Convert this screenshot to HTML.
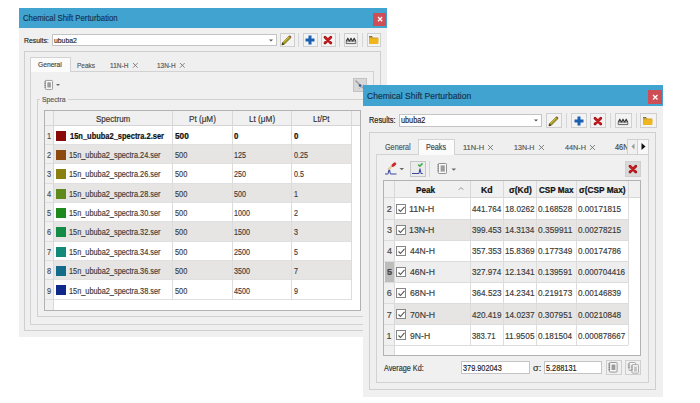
<!DOCTYPE html><html><head><meta charset="utf-8"><style>
html,body{margin:0;padding:0;background:#fff;width:700px;height:403px;overflow:hidden;position:relative;}
.b{position:absolute;box-sizing:border-box;}
.t{position:absolute;white-space:nowrap;font-family:"Liberation Sans",sans-serif;transform-origin:0 0;-webkit-text-stroke:0.16px currentColor;}
svg.b{overflow:visible;}
</style></head><body>
<div class="b" style="left:19px;top:8px;width:368px;height:329px;background:#f0f0f0;"></div>
<div class="b" style="left:19px;top:8px;width:368px;height:20px;background:#41a3cf;"></div>
<div class="t" style="left:23.11px;top:12px;font-size:9.16px;line-height:12px;color:#15324f;transform:scaleX(0.8497);">Chemical Shift Perturbation</div>
<div class="b" style="left:373px;top:13px;width:13px;height:13px;background:#cf4d55;"></div>
<svg class="b" style="left:377.8px;top:17px" width="4.2" height="4.2" viewBox="0 0 4.2 4.2"><path d="M0 0L4.2 4.2M4.2 0L0 4.2" stroke="#fff" stroke-width="1.3"/></svg>
<div class="t" style="left:24.15px;top:36px;font-size:7.85px;line-height:10px;color:#222;transform:scaleX(0.8722);">Results:</div>
<div class="b" style="left:52px;top:34px;width:225px;height:12px;border:1px solid #c4c4c4;background:#fff;"></div>
<div class="t" style="left:54.06px;top:36px;font-size:7.85px;line-height:10px;color:#222;transform:scaleX(0.8699);">ububa2</div>
<svg class="b" style="left:268px;top:38px" width="6" height="5"><path d="M1 1.5h4l-2 2z" fill="#555"/></svg>
<div class="b" style="left:280px;top:33px;width:15px;height:14px;border:1px solid #cfcfcf;background:#f3f3f3;"></div>
<svg class="b" style="left:281.3px;top:34px" width="12.0" height="12.0" viewBox="0 0 12 12"><path d="M0.9 10.9 L1.5 8.5 L8.0 2.0 L9.8 3.8 L3.3 10.3 Z" fill="#a89a22" stroke="#5a4e10" stroke-width="0.6"/><path d="M2.2 8.4 L8.2 2.4" stroke="#e8df60" stroke-width="0.8"/><path d="M8.0 2.0 L8.8 1.2 L10.6 3.0 L9.8 3.8 Z" fill="#8a4a30"/><path d="M0.9 10.9 L1.5 8.5 L3.3 10.3 Z" fill="#3a3020"/></svg>
<div class="b" style="left:298px;top:33px;width:1px;height:14px;background:#d6d6d6;"></div>
<div class="b" style="left:303px;top:33px;width:15px;height:14px;border:1px solid #cfcfcf;background:#f3f3f3;"></div>
<svg class="b" style="left:304px;top:34px" width="12.0" height="12.0" viewBox="0 0 12 12"><path d="M4.5 1.6h3v3h3v3h-3v3h-3v-3h-3v-3h3z" fill="#1b5fb2"/></svg>
<div class="b" style="left:321px;top:33px;width:15px;height:14px;border:1px solid #cfcfcf;background:#f3f3f3;"></div>
<svg class="b" style="left:322px;top:34px" width="12.0" height="12.0" viewBox="0 0 12 12"><path d="M3 3.2L8.8 9M8.8 3.2L3 9" stroke="#a01416" stroke-width="2.8" stroke-linecap="round"/><path d="M3.4 3.6L8.4 8.6M8.4 3.6L3.4 8.6" stroke="#d01c1e" stroke-width="1.4" stroke-linecap="round"/></svg>
<div class="b" style="left:339px;top:33px;width:1px;height:14px;background:#d6d6d6;"></div>
<div class="b" style="left:344px;top:33px;width:14px;height:14px;border:1px solid #cfcfcf;background:#f3f3f3;"></div>
<svg class="b" style="left:345px;top:34px" width="12.0" height="12.0" viewBox="0 0 12 12"><path d="M1.2 7.2 L2.8 4.2 L4.4 7.2 L6 4.2 L7.6 7.2 L9.2 4.2 L10.8 7.2" fill="#aaa" stroke="#3a3a3a" stroke-width="1.1" stroke-linejoin="round"/><path d="M1.2 7.4 V9.6 H10.8 V7.4" fill="none" stroke="#555" stroke-width="0.9"/><path d="M1.2 7.6 H10.8" stroke="#777" stroke-width="0.7"/></svg>
<div class="b" style="left:362px;top:33px;width:1px;height:14px;background:#d6d6d6;"></div>
<div class="b" style="left:367px;top:33px;width:14px;height:14px;border:1px solid #cfcfcf;background:#f3f3f3;"></div>
<svg class="b" style="left:368px;top:34px" width="12.0" height="12.0" viewBox="0 0 12 12"><path d="M1 2.4h3l0.8 1h5.4v6.4h-9.2z" fill="#cfa22a"/><path d="M1 2.6h3l0.6 0.8" fill="none" stroke="#6e6430" stroke-width="0.9"/><path d="M1.4 4.4h9.2l-0.5 5.6h-8.8z" fill="#f0b61e"/></svg>
<div class="b" style="left:24px;top:51px;width:357px;height:280px;border:1px solid #cfcfcf;background:#efefef;"></div>
<div class="b" style="left:30px;top:71px;width:344px;height:254px;border:1px solid #d2d2d2;background:#f0f0f0;"></div>
<div class="b" style="left:30px;top:57px;width:41px;height:15px;border:1px solid #d2d2d2;background:#fbfbfb;"></div>
<div class="b" style="left:31px;top:71px;width:39px;height:1px;background:#fbfbfb;"></div>
<div class="t" style="left:38.37px;top:60px;font-size:8.00px;line-height:10px;color:#444;transform:scaleX(0.8358);">General</div>
<div class="t" style="left:76.88px;top:61px;font-size:8.00px;line-height:10px;color:#555;transform:scaleX(0.8114);">Peaks</div>
<div class="t" style="left:110.41px;top:61px;font-size:8.00px;line-height:10px;color:#555;transform:scaleX(0.8177);">11N-H</div>
<svg class="b" style="left:133.3px;top:63.2px" width="4.7" height="4.7" viewBox="0 0 4.7 4.7"><path d="M0 0L4.7 4.7M4.7 0L0 4.7" stroke="#6a6a6a" stroke-width="0.8"/></svg>
<div class="t" style="left:156.82px;top:61px;font-size:8.00px;line-height:10px;color:#555;transform:scaleX(0.8044);">13N-H</div>
<svg class="b" style="left:179.8px;top:63.2px" width="4.7" height="4.7" viewBox="0 0 4.7 4.7"><path d="M0 0L4.7 4.7M4.7 0L0 4.7" stroke="#6a6a6a" stroke-width="0.8"/></svg>
<svg class="b" style="left:43.5px;top:79.5px" width="9.0" height="9.9" viewBox="0 0 10 11"><rect x="1.4" y="0.5" width="8.1" height="10" rx="0.9" fill="#f8f8f8" stroke="#8a8a8a" stroke-width="0.9"/><rect x="3.7" y="2.6" width="4" height="5.8" rx="0.6" fill="#9c9c9c"/><path d="M0.2 2h2.2M0.2 4h2.2M0.2 6h2.2M0.2 8h2.2" stroke="#7a7a7a" stroke-width="0.8"/></svg>
<svg class="b" style="left:55.8px;top:84.4px" width="5" height="3"><path d="M0 0h4l-2 2z" fill="#666"/></svg>
<div class="b" style="left:353px;top:78px;width:14px;height:14px;border:1px solid #c2c2c2;background:#d8d8d8;"></div>
<svg class="b" style="left:354px;top:79px" width="12" height="12" viewBox="0 0 12 12"><path d="M1.5 1.5L10 10" stroke="#999" stroke-width="1.2"/><path d="M5 10L10 5" stroke="#bbb" stroke-width="0.8"/><circle cx="6" cy="6.5" r="1.3" fill="#2b5fa8"/></svg>
<div class="b" style="left:37px;top:99px;width:364px;height:218px;border:1px solid #d0d0d0;"></div>
<div class="b" style="left:40px;top:96px;width:28px;height:6px;background:#f0f0f0;"></div>
<div class="t" style="left:42.39px;top:95px;font-size:7.27px;line-height:9px;color:#5a5a5a;transform:scaleX(0.9423);">Spectra</div>
<div class="b" style="left:44px;top:110px;width:317px;height:201px;border:1px solid #b2b2b2;background:#ffffff;"></div>
<div class="b" style="left:45px;top:111px;width:315px;height:14px;background:#f0f0f0;"></div>
<div class="b" style="left:45px;top:125px;width:315px;height:1px;background:#d5d5d5;"></div>
<div class="b" style="left:53px;top:111px;width:1px;height:14px;background:#d8d8d8;"></div>
<div class="b" style="left:172px;top:111px;width:1px;height:14px;background:#d8d8d8;"></div>
<div class="b" style="left:232px;top:111px;width:1px;height:14px;background:#d8d8d8;"></div>
<div class="b" style="left:291px;top:111px;width:1px;height:14px;background:#d8d8d8;"></div>
<div class="b" style="left:351px;top:111px;width:1px;height:14px;background:#d8d8d8;"></div>
<div class="b" style="left:45px;top:126px;width:8px;height:184px;background:#f0f0f0;"></div>
<div class="b" style="left:53px;top:126px;width:1px;height:184px;background:#d8d8d8;"></div>
<div class="t" style="left:96.44px;top:114px;font-size:8.73px;line-height:11px;color:#333;transform:scaleX(0.9178);">Spectrum</div>
<div class="t" style="left:188.65px;top:114px;font-size:8.73px;line-height:11px;color:#333;transform:scaleX(0.9334);">Pt (μM)</div>
<div class="t" style="left:249.34px;top:114px;font-size:8.73px;line-height:11px;color:#333;transform:scaleX(0.9407);">Lt (μM)</div>
<div class="t" style="left:313.16px;top:114px;font-size:8.73px;line-height:11px;color:#333;transform:scaleX(0.9190);">Lt/Pt</div>
<div class="b" style="left:45px;top:144px;width:8px;height:1px;background:#dedede;"></div>
<div class="b" style="left:54px;top:144px;width:297px;height:1px;background:#e0e0e0;"></div>
<div class="b" style="left:172px;top:126px;width:1px;height:19px;background:#dcdcdc;"></div>
<div class="b" style="left:232px;top:126px;width:1px;height:19px;background:#dcdcdc;"></div>
<div class="b" style="left:291px;top:126px;width:1px;height:19px;background:#dcdcdc;"></div>
<div class="b" style="left:351px;top:126px;width:1px;height:19px;background:#dcdcdc;"></div>
<div class="t" style="left:46.85px;top:131px;font-size:8.73px;line-height:11px;color:#4a4a4a;transform:scaleX(0.8500);">1</div>
<div class="b" style="left:56px;top:131px;width:10px;height:10px;background:#8a0a0a;"></div>
<div class="t" style="left:69.55px;top:130px;font-size:8.87px;line-height:12px;color:#111;font-weight:bold;-webkit-text-stroke:0.22px currentColor;transform:scaleX(0.8446);">15n_ububa2_spectra.2.ser</div>
<div class="t" style="left:174.55px;top:131px;font-size:8.73px;line-height:11px;color:#111;font-weight:bold;-webkit-text-stroke:0.22px currentColor;transform:scaleX(0.9483);">500</div>
<div class="t" style="left:234.19px;top:131px;font-size:8.73px;line-height:11px;color:#111;font-weight:bold;-webkit-text-stroke:0.22px currentColor;transform:scaleX(0.9000);">0</div>
<div class="t" style="left:294.19px;top:131px;font-size:8.73px;line-height:11px;color:#111;font-weight:bold;-webkit-text-stroke:0.22px currentColor;transform:scaleX(0.9000);">0</div>
<div class="b" style="left:54px;top:145px;width:297px;height:19px;background:#e6e5e3;"></div>
<div class="b" style="left:45px;top:163px;width:8px;height:1px;background:#dedede;"></div>
<div class="b" style="left:54px;top:163px;width:297px;height:1px;background:#e0e0e0;"></div>
<div class="b" style="left:172px;top:145px;width:1px;height:19px;background:#dcdcdc;"></div>
<div class="b" style="left:232px;top:145px;width:1px;height:19px;background:#dcdcdc;"></div>
<div class="b" style="left:291px;top:145px;width:1px;height:19px;background:#dcdcdc;"></div>
<div class="b" style="left:351px;top:145px;width:1px;height:19px;background:#dcdcdc;"></div>
<div class="t" style="left:46.96px;top:150px;font-size:8.73px;line-height:11px;color:#4a4a4a;transform:scaleX(0.8500);">2</div>
<div class="b" style="left:56px;top:150px;width:10px;height:10px;background:#8c4a10;"></div>
<div class="t" style="left:69.45px;top:149px;font-size:8.87px;line-height:12px;color:#3a3a3a;transform:scaleX(0.8294);">15n_ububa2_spectra.24.ser</div>
<div class="t" style="left:174.50px;top:150px;font-size:8.73px;line-height:11px;color:#3a3a3a;transform:scaleX(0.8504);">500</div>
<div class="t" style="left:233.96px;top:150px;font-size:8.73px;line-height:11px;color:#3a3a3a;transform:scaleX(0.8200);">125</div>
<div class="t" style="left:294.21px;top:150px;font-size:8.73px;line-height:11px;color:#3a3a3a;transform:scaleX(0.8200);">0.25</div>
<div class="b" style="left:45px;top:183px;width:8px;height:1px;background:#dedede;"></div>
<div class="b" style="left:54px;top:183px;width:297px;height:1px;background:#e0e0e0;"></div>
<div class="b" style="left:172px;top:164px;width:1px;height:20px;background:#dcdcdc;"></div>
<div class="b" style="left:232px;top:164px;width:1px;height:20px;background:#dcdcdc;"></div>
<div class="b" style="left:291px;top:164px;width:1px;height:20px;background:#dcdcdc;"></div>
<div class="b" style="left:351px;top:164px;width:1px;height:20px;background:#dcdcdc;"></div>
<div class="t" style="left:46.98px;top:169px;font-size:8.73px;line-height:11px;color:#4a4a4a;transform:scaleX(0.8500);">3</div>
<div class="b" style="left:56px;top:169px;width:10px;height:10px;background:#8a8012;"></div>
<div class="t" style="left:69.45px;top:168px;font-size:8.87px;line-height:12px;color:#3a3a3a;transform:scaleX(0.8294);">15n_ububa2_spectra.26.ser</div>
<div class="t" style="left:174.50px;top:169px;font-size:8.73px;line-height:11px;color:#3a3a3a;transform:scaleX(0.8504);">500</div>
<div class="t" style="left:234.14px;top:169px;font-size:8.73px;line-height:11px;color:#3a3a3a;transform:scaleX(0.8200);">250</div>
<div class="t" style="left:294.21px;top:169px;font-size:8.73px;line-height:11px;color:#3a3a3a;transform:scaleX(0.8200);">0.5</div>
<div class="b" style="left:54px;top:184px;width:297px;height:19px;background:#e6e5e3;"></div>
<div class="b" style="left:45px;top:202px;width:8px;height:1px;background:#dedede;"></div>
<div class="b" style="left:54px;top:202px;width:297px;height:1px;background:#e0e0e0;"></div>
<div class="b" style="left:172px;top:184px;width:1px;height:19px;background:#dcdcdc;"></div>
<div class="b" style="left:232px;top:184px;width:1px;height:19px;background:#dcdcdc;"></div>
<div class="b" style="left:291px;top:184px;width:1px;height:19px;background:#dcdcdc;"></div>
<div class="b" style="left:351px;top:184px;width:1px;height:19px;background:#dcdcdc;"></div>
<div class="t" style="left:46.98px;top:189px;font-size:8.73px;line-height:11px;color:#4a4a4a;transform:scaleX(0.8500);">4</div>
<div class="b" style="left:56px;top:189px;width:10px;height:10px;background:#5d8a1a;"></div>
<div class="t" style="left:69.45px;top:188px;font-size:8.87px;line-height:12px;color:#3a3a3a;transform:scaleX(0.8294);">15n_ububa2_spectra.28.ser</div>
<div class="t" style="left:174.50px;top:189px;font-size:8.73px;line-height:11px;color:#3a3a3a;transform:scaleX(0.8504);">500</div>
<div class="t" style="left:234.21px;top:189px;font-size:8.73px;line-height:11px;color:#3a3a3a;transform:scaleX(0.8200);">500</div>
<div class="t" style="left:293.96px;top:189px;font-size:8.73px;line-height:11px;color:#3a3a3a;transform:scaleX(0.8200);">1</div>
<div class="b" style="left:45px;top:221px;width:8px;height:1px;background:#dedede;"></div>
<div class="b" style="left:54px;top:221px;width:297px;height:1px;background:#e0e0e0;"></div>
<div class="b" style="left:172px;top:203px;width:1px;height:19px;background:#dcdcdc;"></div>
<div class="b" style="left:232px;top:203px;width:1px;height:19px;background:#dcdcdc;"></div>
<div class="b" style="left:291px;top:203px;width:1px;height:19px;background:#dcdcdc;"></div>
<div class="b" style="left:351px;top:203px;width:1px;height:19px;background:#dcdcdc;"></div>
<div class="t" style="left:46.96px;top:208px;font-size:8.73px;line-height:11px;color:#4a4a4a;transform:scaleX(0.8500);">5</div>
<div class="b" style="left:56px;top:208px;width:10px;height:10px;background:#1e8a1e;"></div>
<div class="t" style="left:69.45px;top:207px;font-size:8.87px;line-height:12px;color:#3a3a3a;transform:scaleX(0.8294);">15n_ububa2_spectra.30.ser</div>
<div class="t" style="left:174.50px;top:208px;font-size:8.73px;line-height:11px;color:#3a3a3a;transform:scaleX(0.8504);">500</div>
<div class="t" style="left:233.96px;top:208px;font-size:8.73px;line-height:11px;color:#3a3a3a;transform:scaleX(0.8200);">1000</div>
<div class="t" style="left:294.14px;top:208px;font-size:8.73px;line-height:11px;color:#3a3a3a;transform:scaleX(0.8200);">2</div>
<div class="b" style="left:54px;top:222px;width:297px;height:20px;background:#e6e5e3;"></div>
<div class="b" style="left:45px;top:241px;width:8px;height:1px;background:#dedede;"></div>
<div class="b" style="left:54px;top:241px;width:297px;height:1px;background:#e0e0e0;"></div>
<div class="b" style="left:172px;top:222px;width:1px;height:20px;background:#dcdcdc;"></div>
<div class="b" style="left:232px;top:222px;width:1px;height:20px;background:#dcdcdc;"></div>
<div class="b" style="left:291px;top:222px;width:1px;height:20px;background:#dcdcdc;"></div>
<div class="b" style="left:351px;top:222px;width:1px;height:20px;background:#dcdcdc;"></div>
<div class="t" style="left:46.92px;top:227px;font-size:8.73px;line-height:11px;color:#4a4a4a;transform:scaleX(0.8500);">6</div>
<div class="b" style="left:56px;top:227px;width:10px;height:10px;background:#138a45;"></div>
<div class="t" style="left:69.45px;top:226px;font-size:8.87px;line-height:12px;color:#3a3a3a;transform:scaleX(0.8294);">15n_ububa2_spectra.32.ser</div>
<div class="t" style="left:174.50px;top:227px;font-size:8.73px;line-height:11px;color:#3a3a3a;transform:scaleX(0.8504);">500</div>
<div class="t" style="left:233.96px;top:227px;font-size:8.73px;line-height:11px;color:#3a3a3a;transform:scaleX(0.8200);">1500</div>
<div class="t" style="left:294.25px;top:227px;font-size:8.73px;line-height:11px;color:#3a3a3a;transform:scaleX(0.8200);">3</div>
<div class="b" style="left:45px;top:260px;width:8px;height:1px;background:#dedede;"></div>
<div class="b" style="left:54px;top:260px;width:297px;height:1px;background:#e0e0e0;"></div>
<div class="b" style="left:172px;top:242px;width:1px;height:19px;background:#dcdcdc;"></div>
<div class="b" style="left:232px;top:242px;width:1px;height:19px;background:#dcdcdc;"></div>
<div class="b" style="left:291px;top:242px;width:1px;height:19px;background:#dcdcdc;"></div>
<div class="b" style="left:351px;top:242px;width:1px;height:19px;background:#dcdcdc;"></div>
<div class="t" style="left:46.96px;top:247px;font-size:8.73px;line-height:11px;color:#4a4a4a;transform:scaleX(0.8500);">7</div>
<div class="b" style="left:56px;top:247px;width:10px;height:10px;background:#138a78;"></div>
<div class="t" style="left:69.45px;top:246px;font-size:8.87px;line-height:12px;color:#3a3a3a;transform:scaleX(0.8294);">15n_ububa2_spectra.34.ser</div>
<div class="t" style="left:174.50px;top:247px;font-size:8.73px;line-height:11px;color:#3a3a3a;transform:scaleX(0.8504);">500</div>
<div class="t" style="left:234.14px;top:247px;font-size:8.73px;line-height:11px;color:#3a3a3a;transform:scaleX(0.8200);">2500</div>
<div class="t" style="left:294.21px;top:247px;font-size:8.73px;line-height:11px;color:#3a3a3a;transform:scaleX(0.8200);">5</div>
<div class="b" style="left:54px;top:261px;width:297px;height:19px;background:#e6e5e3;"></div>
<div class="b" style="left:45px;top:279px;width:8px;height:1px;background:#dedede;"></div>
<div class="b" style="left:54px;top:279px;width:297px;height:1px;background:#e0e0e0;"></div>
<div class="b" style="left:172px;top:261px;width:1px;height:19px;background:#dcdcdc;"></div>
<div class="b" style="left:232px;top:261px;width:1px;height:19px;background:#dcdcdc;"></div>
<div class="b" style="left:291px;top:261px;width:1px;height:19px;background:#dcdcdc;"></div>
<div class="b" style="left:351px;top:261px;width:1px;height:19px;background:#dcdcdc;"></div>
<div class="t" style="left:46.96px;top:266px;font-size:8.73px;line-height:11px;color:#4a4a4a;transform:scaleX(0.8500);">8</div>
<div class="b" style="left:56px;top:266px;width:10px;height:10px;background:#136a8a;"></div>
<div class="t" style="left:69.45px;top:265px;font-size:8.87px;line-height:12px;color:#3a3a3a;transform:scaleX(0.8294);">15n_ububa2_spectra.36.ser</div>
<div class="t" style="left:174.50px;top:266px;font-size:8.73px;line-height:11px;color:#3a3a3a;transform:scaleX(0.8504);">500</div>
<div class="t" style="left:234.25px;top:266px;font-size:8.73px;line-height:11px;color:#3a3a3a;transform:scaleX(0.8200);">3500</div>
<div class="t" style="left:294.14px;top:266px;font-size:8.73px;line-height:11px;color:#3a3a3a;transform:scaleX(0.8200);">7</div>
<div class="b" style="left:45px;top:299px;width:8px;height:1px;background:#dedede;"></div>
<div class="b" style="left:54px;top:299px;width:297px;height:1px;background:#e0e0e0;"></div>
<div class="b" style="left:172px;top:280px;width:1px;height:20px;background:#dcdcdc;"></div>
<div class="b" style="left:232px;top:280px;width:1px;height:20px;background:#dcdcdc;"></div>
<div class="b" style="left:291px;top:280px;width:1px;height:20px;background:#dcdcdc;"></div>
<div class="b" style="left:351px;top:280px;width:1px;height:20px;background:#dcdcdc;"></div>
<div class="t" style="left:46.96px;top:286px;font-size:8.73px;line-height:11px;color:#4a4a4a;transform:scaleX(0.8500);">9</div>
<div class="b" style="left:56px;top:285px;width:10px;height:10px;background:#0f2a8a;"></div>
<div class="t" style="left:69.45px;top:285px;font-size:8.87px;line-height:12px;color:#3a3a3a;transform:scaleX(0.8294);">15n_ububa2_spectra.38.ser</div>
<div class="t" style="left:174.50px;top:286px;font-size:8.73px;line-height:11px;color:#3a3a3a;transform:scaleX(0.8504);">500</div>
<div class="t" style="left:234.36px;top:286px;font-size:8.73px;line-height:11px;color:#3a3a3a;transform:scaleX(0.8200);">4500</div>
<div class="t" style="left:294.18px;top:286px;font-size:8.73px;line-height:11px;color:#3a3a3a;transform:scaleX(0.8200);">9</div>
<div class="b" style="left:363px;top:85px;width:300px;height:312px;background:#f0f0f0;"></div>
<div class="b" style="left:363px;top:85px;width:300px;height:21px;background:#41a3cf;"></div>
<div class="t" style="left:367.27px;top:90px;font-size:9.31px;line-height:12px;color:#15324f;transform:scaleX(0.9210);">Chemical Shift Perturbation</div>
<div class="b" style="left:648px;top:90px;width:14px;height:14px;background:#cf4d55;"></div>
<svg class="b" style="left:652.8px;top:95px" width="4.5" height="4.5" viewBox="0 0 4.5 4.5"><path d="M0 0L4.5 4.5M4.5 0L0 4.5" stroke="#fff" stroke-width="1.3"/></svg>
<div class="t" style="left:368.61px;top:115px;font-size:8.15px;line-height:11px;color:#222;transform:scaleX(0.9052);">Results:</div>
<div class="b" style="left:399px;top:114px;width:143px;height:13px;border:1px solid #c4c4c4;background:#fff;"></div>
<div class="t" style="left:401.23px;top:115px;font-size:8.15px;line-height:11px;color:#222;transform:scaleX(0.8960);">ububa2</div>
<svg class="b" style="left:533px;top:118px" width="6" height="5"><path d="M1 1.5h4l-2 2z" fill="#555"/></svg>
<div class="b" style="left:546px;top:113px;width:16px;height:15px;border:1px solid #cfcfcf;background:#f3f3f3;"></div>
<svg class="b" style="left:547.5px;top:114.5px" width="12.0" height="12.0" viewBox="0 0 12 12"><path d="M0.9 10.9 L1.5 8.5 L8.0 2.0 L9.8 3.8 L3.3 10.3 Z" fill="#a89a22" stroke="#5a4e10" stroke-width="0.6"/><path d="M2.2 8.4 L8.2 2.4" stroke="#e8df60" stroke-width="0.8"/><path d="M8.0 2.0 L8.8 1.2 L10.6 3.0 L9.8 3.8 Z" fill="#8a4a30"/><path d="M0.9 10.9 L1.5 8.5 L3.3 10.3 Z" fill="#3a3020"/></svg>
<div class="b" style="left:566px;top:113px;width:1px;height:15px;background:#d6d6d6;"></div>
<div class="b" style="left:571px;top:113px;width:16px;height:15px;border:1px solid #cfcfcf;background:#f3f3f3;"></div>
<svg class="b" style="left:572.5px;top:114.5px" width="12.0" height="12.0" viewBox="0 0 12 12"><path d="M4.5 1.6h3v3h3v3h-3v3h-3v-3h-3v-3h3z" fill="#1b5fb2"/></svg>
<div class="b" style="left:590px;top:113px;width:16px;height:15px;border:1px solid #cfcfcf;background:#f3f3f3;"></div>
<svg class="b" style="left:591.5px;top:114.5px" width="12.0" height="12.0" viewBox="0 0 12 12"><path d="M3 3.2L8.8 9M8.8 3.2L3 9" stroke="#a01416" stroke-width="2.8" stroke-linecap="round"/><path d="M3.4 3.6L8.4 8.6M8.4 3.6L3.4 8.6" stroke="#d01c1e" stroke-width="1.4" stroke-linecap="round"/></svg>
<div class="b" style="left:610px;top:113px;width:1px;height:15px;background:#d6d6d6;"></div>
<div class="b" style="left:615px;top:113px;width:17px;height:15px;border:1px solid #cfcfcf;background:#f3f3f3;"></div>
<svg class="b" style="left:617px;top:114.5px" width="12.0" height="12.0" viewBox="0 0 12 12"><path d="M1.2 7.2 L2.8 4.2 L4.4 7.2 L6 4.2 L7.6 7.2 L9.2 4.2 L10.8 7.2" fill="#aaa" stroke="#3a3a3a" stroke-width="1.1" stroke-linejoin="round"/><path d="M1.2 7.4 V9.6 H10.8 V7.4" fill="none" stroke="#555" stroke-width="0.9"/><path d="M1.2 7.6 H10.8" stroke="#777" stroke-width="0.7"/></svg>
<div class="b" style="left:636px;top:113px;width:1px;height:15px;background:#d6d6d6;"></div>
<div class="b" style="left:640px;top:113px;width:17px;height:15px;border:1px solid #cfcfcf;background:#f3f3f3;"></div>
<svg class="b" style="left:642px;top:114.5px" width="12.0" height="12.0" viewBox="0 0 12 12"><path d="M1 2.4h3l0.8 1h5.4v6.4h-9.2z" fill="#cfa22a"/><path d="M1 2.6h3l0.6 0.8" fill="none" stroke="#6e6430" stroke-width="0.9"/><path d="M1.4 4.4h9.2l-0.5 5.6h-8.8z" fill="#f0b61e"/></svg>
<div class="b" style="left:369px;top:132px;width:287px;height:258px;border:1px solid #cfcfcf;background:#efefef;"></div>
<div class="b" style="left:376px;top:154px;width:273px;height:229px;border:1px solid #d2d2d2;background:#f0f0f0;"></div>
<div class="b" style="left:418px;top:139px;width:37px;height:16px;border:1px solid #d2d2d2;background:#fbfbfb;"></div>
<div class="b" style="left:419px;top:154px;width:35px;height:1px;background:#fbfbfb;"></div>
<div class="t" style="left:384.54px;top:142px;font-size:8.29px;line-height:11px;color:#555;transform:scaleX(0.8730);">General</div>
<div class="t" style="left:426.22px;top:142px;font-size:8.29px;line-height:11px;color:#444;transform:scaleX(0.8690);">Peaks</div>
<div class="t" style="left:462.54px;top:143px;font-size:7.71px;line-height:10px;color:#555;transform:scaleX(0.9753);">11N-H</div>
<svg class="b" style="left:488.3px;top:145.2px" width="4.9" height="4.9" viewBox="0 0 4.9 4.9"><path d="M0 0L4.9 4.9M4.9 0L0 4.9" stroke="#6a6a6a" stroke-width="0.85"/></svg>
<div class="t" style="left:514.07px;top:143px;font-size:7.71px;line-height:10px;color:#555;transform:scaleX(0.9201);">13N-H</div>
<svg class="b" style="left:539.3px;top:145.2px" width="4.9" height="4.9" viewBox="0 0 4.9 4.9"><path d="M0 0L4.9 4.9M4.9 0L0 4.9" stroke="#6a6a6a" stroke-width="0.85"/></svg>
<div class="t" style="left:564.55px;top:143px;font-size:7.71px;line-height:10px;color:#555;transform:scaleX(0.9438);">44N-H</div>
<svg class="b" style="left:590.3px;top:145.2px" width="4.9" height="4.9" viewBox="0 0 4.9 4.9"><path d="M0 0L4.9 4.9M4.9 0L0 4.9" stroke="#6a6a6a" stroke-width="0.85"/></svg>
<div class="b" style="left:610px;top:139px;width:17px;height:15px;overflow:hidden">
<div class="t" style="left:5.45px;top:3px;font-size:8.29px;line-height:11px;color:#444;transform:scaleX(0.8862);">46N-H</div>
</div>
<div class="b" style="left:627px;top:139px;width:11px;height:16px;border:1px solid #d0d0d0;background:#f0f0f0;"></div>
<div class="b" style="left:637px;top:139px;width:12px;height:16px;border:1px solid #d0d0d0;background:#f7f7f7;"></div>
<svg class="b" style="left:629px;top:142px" width="8" height="10"><path d="M5.5 1.5v6l-3-3z" fill="#999"/></svg>
<svg class="b" style="left:639px;top:142px" width="8" height="10"><path d="M2.5 1v7l4-3.5z" fill="#111"/></svg>
<svg class="b" style="left:384px;top:161px" width="14" height="15" viewBox="0 0 14 15"><path d="M1 13H3.6C4.6 13 4.9 7.2 5.2 7.2C5.5 7.2 5.8 13 6.8 13H12.5" fill="none" stroke="#3a48a6" stroke-width="1.1"/><path d="M4.0 8.6L8.8 4.6" stroke="#e2cda6" stroke-width="2.2"/><path d="M9.0 4.4L10.8 2.9" stroke="#cc2a2a" stroke-width="3" stroke-linecap="round"/></svg>
<svg class="b" style="left:399px;top:167px" width="6" height="4"><path d="M0.5 1h4.5l-2.25 2.2z" fill="#666"/></svg>
<div class="b" style="left:410px;top:161px;width:16px;height:16px;border:1px solid #c6c6c6;background:#ebebeb;"></div>
<svg class="b" style="left:410px;top:161px" width="15" height="15" viewBox="0 0 15 15"><path d="M2 12.5H8.6C9.4 12.5 9.7 7.8 10 7.8C10.3 7.8 10.6 12.5 11.4 12.5H12.8" fill="none" stroke="#3a48a6" stroke-width="1.1"/><path d="M8.2 3.6L9.9 5.2L12.5 2.4" fill="none" stroke="#46ac46" stroke-width="1.6"/></svg>
<div class="b" style="left:429px;top:161px;width:1px;height:16px;background:#d6d6d6;"></div>
<svg class="b" style="left:437px;top:163px" width="10" height="11" viewBox="0 0 10 11"><rect x="1.3" y="0.5" width="8.2" height="10" rx="0.8" fill="#f8f8f8" stroke="#888" stroke-width="0.9"/><rect x="3.6" y="2.4" width="4.2" height="6.2" fill="#9c9c9c"/><path d="M0.3 1.8h1.6M0.3 3.8h1.6M0.3 5.8h1.6M0.3 7.8h1.6" stroke="#777" stroke-width="0.8"/></svg>
<svg class="b" style="left:450.5px;top:167.5px" width="6" height="4"><path d="M0.5 0.5h4.6l-2.3 2.3z" fill="#666"/></svg>
<div class="b" style="left:625px;top:161px;width:16px;height:16px;border:1px solid #cfcfcf;background:#d9d9d9;"></div>
<svg class="b" style="left:626.5px;top:162.5px" width="12.0" height="12.0" viewBox="0 0 12 12"><path d="M3 3.2L8.8 9M8.8 3.2L3 9" stroke="#a01416" stroke-width="2.8" stroke-linecap="round"/><path d="M3.4 3.6L8.4 8.6M8.4 3.6L3.4 8.6" stroke="#d01c1e" stroke-width="1.4" stroke-linecap="round"/></svg>
<div class="b" style="left:383px;top:180px;width:258px;height:176px;border:1px solid #b2b2b2;background:#ffffff;"></div>
<div class="b" style="left:384px;top:181px;width:256px;height:16px;background:#f0f0f0;"></div>
<div class="b" style="left:384px;top:197px;width:256px;height:1px;background:#d8d8d8;"></div>
<div class="b" style="left:394px;top:181px;width:1px;height:16px;background:#d8d8d8;"></div>
<div class="b" style="left:470px;top:181px;width:1px;height:16px;background:#d8d8d8;"></div>
<div class="b" style="left:503px;top:181px;width:1px;height:16px;background:#d8d8d8;"></div>
<div class="b" style="left:536px;top:181px;width:1px;height:16px;background:#d8d8d8;"></div>
<div class="b" style="left:576px;top:181px;width:1px;height:16px;background:#d8d8d8;"></div>
<div class="b" style="left:628px;top:181px;width:1px;height:16px;background:#d8d8d8;"></div>
<div class="b" style="left:384px;top:198px;width:10px;height:157px;background:#f0f0f0;"></div>
<div class="b" style="left:394px;top:198px;width:1px;height:157px;background:#d8d8d8;"></div>
<div class="t" style="left:416.07px;top:184px;font-size:9.02px;line-height:12px;color:#111;font-weight:bold;-webkit-text-stroke:0.22px currentColor;transform:scaleX(0.9086);">Peak</div>
<svg class="b" style="left:457.5px;top:185.5px" width="7" height="5"><path d="M0.8 3.8L3.1 1.5L5.4 3.8" fill="none" stroke="#8a8a8a" stroke-width="0.9"/></svg>
<div class="t" style="left:481.13px;top:184px;font-size:9.02px;line-height:12px;color:#111;font-weight:bold;-webkit-text-stroke:0.22px currentColor;transform:scaleX(0.9703);">Kd</div>
<div class="t" style="left:508.66px;top:184px;font-size:9.02px;line-height:12px;color:#111;font-weight:bold;-webkit-text-stroke:0.22px currentColor;transform:scaleX(0.9401);">σ(Kd)</div>
<div class="t" style="left:539.28px;top:184px;font-size:9.02px;line-height:12px;color:#111;font-weight:bold;-webkit-text-stroke:0.22px currentColor;transform:scaleX(0.8971);">CSP Max</div>
<div class="t" style="left:579.37px;top:184px;font-size:9.02px;line-height:12px;color:#111;font-weight:bold;-webkit-text-stroke:0.22px currentColor;transform:scaleX(0.9212);">σ(CSP Max)</div>
<div class="b" style="left:470px;top:198px;width:1px;height:21px;background:#dcdcdc;"></div>
<div class="b" style="left:503px;top:198px;width:1px;height:21px;background:#dcdcdc;"></div>
<div class="b" style="left:536px;top:198px;width:1px;height:21px;background:#dcdcdc;"></div>
<div class="b" style="left:576px;top:198px;width:1px;height:21px;background:#dcdcdc;"></div>
<div class="b" style="left:628px;top:198px;width:1px;height:21px;background:#dcdcdc;"></div>
<div class="b" style="left:384px;top:219px;width:244px;height:1px;background:#dcdcdc;"></div>
<div class="t" style="left:386.75px;top:203px;font-size:9.02px;line-height:12px;color:#444;">2</div>
<div class="b" style="left:396px;top:204px;width:10px;height:10px;border:1px solid #858585;background:#fff;"></div>
<svg class="b" style="left:397px;top:205px" width="9" height="9" viewBox="0 0 9 9"><path d="M1.5 4.5L3.5 6.5L7.5 1.8" fill="none" stroke="#555" stroke-width="1.1"/></svg>
<div class="t" style="left:409.32px;top:203px;font-size:9.60px;line-height:12px;color:#3a3a3a;transform:scaleX(0.9398);">11N-H</div>
<div class="t" style="left:471.84px;top:203px;font-size:9.16px;line-height:12px;color:#3a3a3a;transform:scaleX(0.8834);">441.764</div>
<div class="t" style="left:505.39px;top:203px;font-size:9.16px;line-height:12px;color:#3a3a3a;transform:scaleX(0.8943);">18.0262</div>
<div class="t" style="left:538.37px;top:203px;font-size:9.16px;line-height:12px;color:#3a3a3a;transform:scaleX(0.8965);">0.168528</div>
<div class="t" style="left:578.27px;top:203px;font-size:9.16px;line-height:12px;color:#3a3a3a;transform:scaleX(0.8898);">0.00171815</div>
<div class="b" style="left:395px;top:220px;width:233px;height:20px;background:#e6e5e3;"></div>
<div class="b" style="left:470px;top:219px;width:1px;height:21px;background:#dcdcdc;"></div>
<div class="b" style="left:503px;top:219px;width:1px;height:21px;background:#dcdcdc;"></div>
<div class="b" style="left:536px;top:219px;width:1px;height:21px;background:#dcdcdc;"></div>
<div class="b" style="left:576px;top:219px;width:1px;height:21px;background:#dcdcdc;"></div>
<div class="b" style="left:628px;top:219px;width:1px;height:21px;background:#dcdcdc;"></div>
<div class="b" style="left:384px;top:240px;width:244px;height:1px;background:#dcdcdc;"></div>
<div class="t" style="left:386.88px;top:224px;font-size:9.02px;line-height:12px;color:#444;">3</div>
<div class="b" style="left:396px;top:225px;width:10px;height:10px;border:1px solid #858585;background:#fff;"></div>
<svg class="b" style="left:397px;top:226px" width="9" height="9" viewBox="0 0 9 9"><path d="M1.5 4.5L3.5 6.5L7.5 1.8" fill="none" stroke="#555" stroke-width="1.1"/></svg>
<div class="t" style="left:409.34px;top:224px;font-size:9.60px;line-height:12px;color:#3a3a3a;transform:scaleX(0.9141);">13N-H</div>
<div class="t" style="left:471.71px;top:224px;font-size:9.16px;line-height:12px;color:#3a3a3a;transform:scaleX(0.8909);">399.453</div>
<div class="t" style="left:505.39px;top:224px;font-size:9.16px;line-height:12px;color:#3a3a3a;transform:scaleX(0.8879);">14.3134</div>
<div class="t" style="left:538.36px;top:224px;font-size:9.16px;line-height:12px;color:#3a3a3a;transform:scaleX(0.9144);">0.359911</div>
<div class="t" style="left:578.27px;top:224px;font-size:9.16px;line-height:12px;color:#3a3a3a;transform:scaleX(0.8898);">0.00278215</div>
<div class="b" style="left:470px;top:240px;width:1px;height:21px;background:#dcdcdc;"></div>
<div class="b" style="left:503px;top:240px;width:1px;height:21px;background:#dcdcdc;"></div>
<div class="b" style="left:536px;top:240px;width:1px;height:21px;background:#dcdcdc;"></div>
<div class="b" style="left:576px;top:240px;width:1px;height:21px;background:#dcdcdc;"></div>
<div class="b" style="left:628px;top:240px;width:1px;height:21px;background:#dcdcdc;"></div>
<div class="b" style="left:384px;top:261px;width:244px;height:1px;background:#dcdcdc;"></div>
<div class="t" style="left:387.02px;top:245px;font-size:9.02px;line-height:12px;color:#444;">4</div>
<div class="b" style="left:396px;top:246px;width:10px;height:10px;border:1px solid #858585;background:#fff;"></div>
<svg class="b" style="left:397px;top:247px" width="9" height="9" viewBox="0 0 9 9"><path d="M1.5 4.5L3.5 6.5L7.5 1.8" fill="none" stroke="#555" stroke-width="1.1"/></svg>
<div class="t" style="left:409.83px;top:245px;font-size:9.60px;line-height:12px;color:#3a3a3a;transform:scaleX(0.8961);">44N-H</div>
<div class="t" style="left:471.71px;top:245px;font-size:9.16px;line-height:12px;color:#3a3a3a;transform:scaleX(0.8909);">357.353</div>
<div class="t" style="left:505.39px;top:245px;font-size:9.16px;line-height:12px;color:#3a3a3a;transform:scaleX(0.8930);">15.8369</div>
<div class="t" style="left:538.37px;top:245px;font-size:9.16px;line-height:12px;color:#3a3a3a;transform:scaleX(0.8976);">0.177349</div>
<div class="t" style="left:578.27px;top:245px;font-size:9.16px;line-height:12px;color:#3a3a3a;transform:scaleX(0.8898);">0.00174786</div>
<div class="b" style="left:395px;top:262px;width:233px;height:20px;background:#e6e5e3;"></div>
<div class="b" style="left:395px;top:262px;width:233px;height:20px;background:#eeeeee;"></div>
<div class="b" style="left:385px;top:262px;width:9px;height:20px;background:#bdbdbd;"></div>
<div class="b" style="left:470px;top:261px;width:1px;height:21px;background:#dcdcdc;"></div>
<div class="b" style="left:503px;top:261px;width:1px;height:21px;background:#dcdcdc;"></div>
<div class="b" style="left:536px;top:261px;width:1px;height:21px;background:#dcdcdc;"></div>
<div class="b" style="left:576px;top:261px;width:1px;height:21px;background:#dcdcdc;"></div>
<div class="b" style="left:628px;top:261px;width:1px;height:21px;background:#dcdcdc;"></div>
<div class="b" style="left:384px;top:282px;width:244px;height:1px;background:#dcdcdc;"></div>
<div class="t" style="left:386.93px;top:266px;font-size:9.02px;line-height:12px;color:#444;font-weight:bold;-webkit-text-stroke:0.22px currentColor;">5</div>
<div class="b" style="left:396px;top:267px;width:10px;height:10px;border:1px solid #858585;background:#fff;"></div>
<svg class="b" style="left:397px;top:268px" width="9" height="9" viewBox="0 0 9 9"><path d="M1.5 4.5L3.5 6.5L7.5 1.8" fill="none" stroke="#555" stroke-width="1.1"/></svg>
<div class="t" style="left:409.83px;top:266px;font-size:9.60px;line-height:12px;color:#3a3a3a;transform:scaleX(0.8961);">46N-H</div>
<div class="t" style="left:471.72px;top:266px;font-size:9.16px;line-height:12px;color:#3a3a3a;transform:scaleX(0.8871);">327.974</div>
<div class="t" style="left:505.39px;top:266px;font-size:9.16px;line-height:12px;color:#3a3a3a;transform:scaleX(0.8930);">12.1341</div>
<div class="t" style="left:538.37px;top:266px;font-size:9.16px;line-height:12px;color:#3a3a3a;transform:scaleX(0.8976);">0.139591</div>
<div class="t" style="left:578.28px;top:266px;font-size:9.16px;line-height:12px;color:#3a3a3a;transform:scaleX(0.8810);">0.000704416</div>
<div class="b" style="left:470px;top:282px;width:1px;height:21px;background:#dcdcdc;"></div>
<div class="b" style="left:503px;top:282px;width:1px;height:21px;background:#dcdcdc;"></div>
<div class="b" style="left:536px;top:282px;width:1px;height:21px;background:#dcdcdc;"></div>
<div class="b" style="left:576px;top:282px;width:1px;height:21px;background:#dcdcdc;"></div>
<div class="b" style="left:628px;top:282px;width:1px;height:21px;background:#dcdcdc;"></div>
<div class="b" style="left:384px;top:303px;width:244px;height:1px;background:#dcdcdc;"></div>
<div class="t" style="left:386.75px;top:287px;font-size:9.02px;line-height:12px;color:#444;">6</div>
<div class="b" style="left:396px;top:288px;width:10px;height:10px;border:1px solid #858585;background:#fff;"></div>
<svg class="b" style="left:397px;top:289px" width="9" height="9" viewBox="0 0 9 9"><path d="M1.5 4.5L3.5 6.5L7.5 1.8" fill="none" stroke="#555" stroke-width="1.1"/></svg>
<div class="t" style="left:409.57px;top:287px;font-size:9.60px;line-height:12px;color:#3a3a3a;transform:scaleX(0.9058);">68N-H</div>
<div class="t" style="left:471.71px;top:287px;font-size:9.16px;line-height:12px;color:#3a3a3a;transform:scaleX(0.8909);">364.523</div>
<div class="t" style="left:505.39px;top:287px;font-size:9.16px;line-height:12px;color:#3a3a3a;transform:scaleX(0.8930);">14.2341</div>
<div class="t" style="left:538.37px;top:287px;font-size:9.16px;line-height:12px;color:#3a3a3a;transform:scaleX(0.8965);">0.219173</div>
<div class="t" style="left:578.27px;top:287px;font-size:9.16px;line-height:12px;color:#3a3a3a;transform:scaleX(0.8907);">0.00146839</div>
<div class="b" style="left:395px;top:304px;width:233px;height:20px;background:#e6e5e3;"></div>
<div class="b" style="left:470px;top:303px;width:1px;height:21px;background:#dcdcdc;"></div>
<div class="b" style="left:503px;top:303px;width:1px;height:21px;background:#dcdcdc;"></div>
<div class="b" style="left:536px;top:303px;width:1px;height:21px;background:#dcdcdc;"></div>
<div class="b" style="left:576px;top:303px;width:1px;height:21px;background:#dcdcdc;"></div>
<div class="b" style="left:628px;top:303px;width:1px;height:21px;background:#dcdcdc;"></div>
<div class="b" style="left:384px;top:324px;width:244px;height:1px;background:#dcdcdc;"></div>
<div class="t" style="left:386.75px;top:309px;font-size:9.02px;line-height:12px;color:#444;">7</div>
<div class="b" style="left:396px;top:309px;width:10px;height:10px;border:1px solid #858585;background:#fff;"></div>
<svg class="b" style="left:397px;top:310px" width="9" height="9" viewBox="0 0 9 9"><path d="M1.5 4.5L3.5 6.5L7.5 1.8" fill="none" stroke="#555" stroke-width="1.1"/></svg>
<div class="t" style="left:409.57px;top:309px;font-size:9.60px;line-height:12px;color:#3a3a3a;transform:scaleX(0.9058);">70N-H</div>
<div class="t" style="left:471.84px;top:309px;font-size:9.16px;line-height:12px;color:#3a3a3a;transform:scaleX(0.8884);">420.419</div>
<div class="t" style="left:505.39px;top:309px;font-size:9.16px;line-height:12px;color:#3a3a3a;transform:scaleX(0.8943);">14.0237</div>
<div class="t" style="left:538.37px;top:309px;font-size:9.16px;line-height:12px;color:#3a3a3a;transform:scaleX(0.8976);">0.307951</div>
<div class="t" style="left:578.27px;top:309px;font-size:9.16px;line-height:12px;color:#3a3a3a;transform:scaleX(0.8898);">0.00210848</div>
<div class="b" style="left:470px;top:324px;width:1px;height:21px;background:#dcdcdc;"></div>
<div class="b" style="left:503px;top:324px;width:1px;height:21px;background:#dcdcdc;"></div>
<div class="b" style="left:536px;top:324px;width:1px;height:21px;background:#dcdcdc;"></div>
<div class="b" style="left:576px;top:324px;width:1px;height:21px;background:#dcdcdc;"></div>
<div class="b" style="left:628px;top:324px;width:1px;height:21px;background:#dcdcdc;"></div>
<div class="b" style="left:384px;top:345px;width:244px;height:1px;background:#dcdcdc;"></div>
<div class="t" style="left:386.52px;top:330px;font-size:9.02px;line-height:12px;color:#444;">1</div>
<div class="b" style="left:396px;top:330px;width:10px;height:10px;border:1px solid #858585;background:#fff;"></div>
<svg class="b" style="left:397px;top:331px" width="9" height="9" viewBox="0 0 9 9"><path d="M1.5 4.5L3.5 6.5L7.5 1.8" fill="none" stroke="#555" stroke-width="1.1"/></svg>
<div class="t" style="left:409.61px;top:330px;font-size:9.60px;line-height:12px;color:#3a3a3a;transform:scaleX(0.8976);">9N-H</div>
<div class="t" style="left:471.73px;top:330px;font-size:9.16px;line-height:12px;color:#3a3a3a;transform:scaleX(0.8423);">383.71</div>
<div class="t" style="left:505.37px;top:330px;font-size:9.16px;line-height:12px;color:#3a3a3a;transform:scaleX(0.9113);">11.9505</div>
<div class="t" style="left:538.37px;top:330px;font-size:9.16px;line-height:12px;color:#3a3a3a;transform:scaleX(0.8932);">0.181504</div>
<div class="t" style="left:578.28px;top:330px;font-size:9.16px;line-height:12px;color:#3a3a3a;transform:scaleX(0.8825);">0.000878667</div>
<div class="t" style="left:383.60px;top:363px;font-size:8.15px;line-height:11px;color:#333;transform:scaleX(0.8912);">Average Kd:</div>
<div class="b" style="left:461px;top:361px;width:69px;height:13px;border:1px solid #c4c4c4;background:#fff;"></div>
<div class="t" style="left:462.64px;top:363px;font-size:8.29px;line-height:11px;color:#222;transform:scaleX(0.8852);">379.902043</div>
<div class="t" style="left:533.03px;top:363px;font-size:8.29px;line-height:11px;color:#333;transform:scaleX(1.1037);">σ:</div>
<div class="b" style="left:544px;top:361px;width:58px;height:13px;border:1px solid #c4c4c4;background:#fff;"></div>
<div class="t" style="left:546.01px;top:363px;font-size:8.29px;line-height:11px;color:#222;transform:scaleX(0.8858);">5.288131</div>
<div class="b" style="left:606px;top:360px;width:16px;height:15px;border:1px solid #cfcfcf;background:#f0f0f0;"></div>
<svg class="b" style="left:608.3px;top:362.2px" width="9.6" height="10.559999999999999" viewBox="0 0 10 11"><rect x="1.4" y="0.5" width="8.1" height="10" rx="0.9" fill="#f8f8f8" stroke="#8a8a8a" stroke-width="0.9"/><rect x="3.7" y="2.6" width="4" height="5.8" rx="0.6" fill="#9c9c9c"/><path d="M0.2 2h2.2M0.2 4h2.2M0.2 6h2.2M0.2 8h2.2" stroke="#7a7a7a" stroke-width="0.8"/></svg>
<div class="b" style="left:625px;top:360px;width:16px;height:15px;border:1px solid #cfcfcf;background:#f0f0f0;"></div>
<svg class="b" style="left:627px;top:362px" width="13" height="12" viewBox="0 0 13 12"><rect x="2" y="0.5" width="6.5" height="8" rx="0.8" fill="#f4f4f4" stroke="#9a9a9a" stroke-width="0.8"/><path d="M0.8 2h2M0.8 3.8h2M0.8 5.6h2" stroke="#888" stroke-width="0.8"/><rect x="5" y="2.6" width="6.5" height="8.6" rx="0.8" fill="#f4f4f4" stroke="#9a9a9a" stroke-width="0.8"/><path d="M3.8 4h2M3.8 5.8h2M3.8 7.6h2" stroke="#888" stroke-width="0.8"/><rect x="7" y="4.6" width="3" height="5" fill="#c4c4c4"/></svg>
</body></html>
